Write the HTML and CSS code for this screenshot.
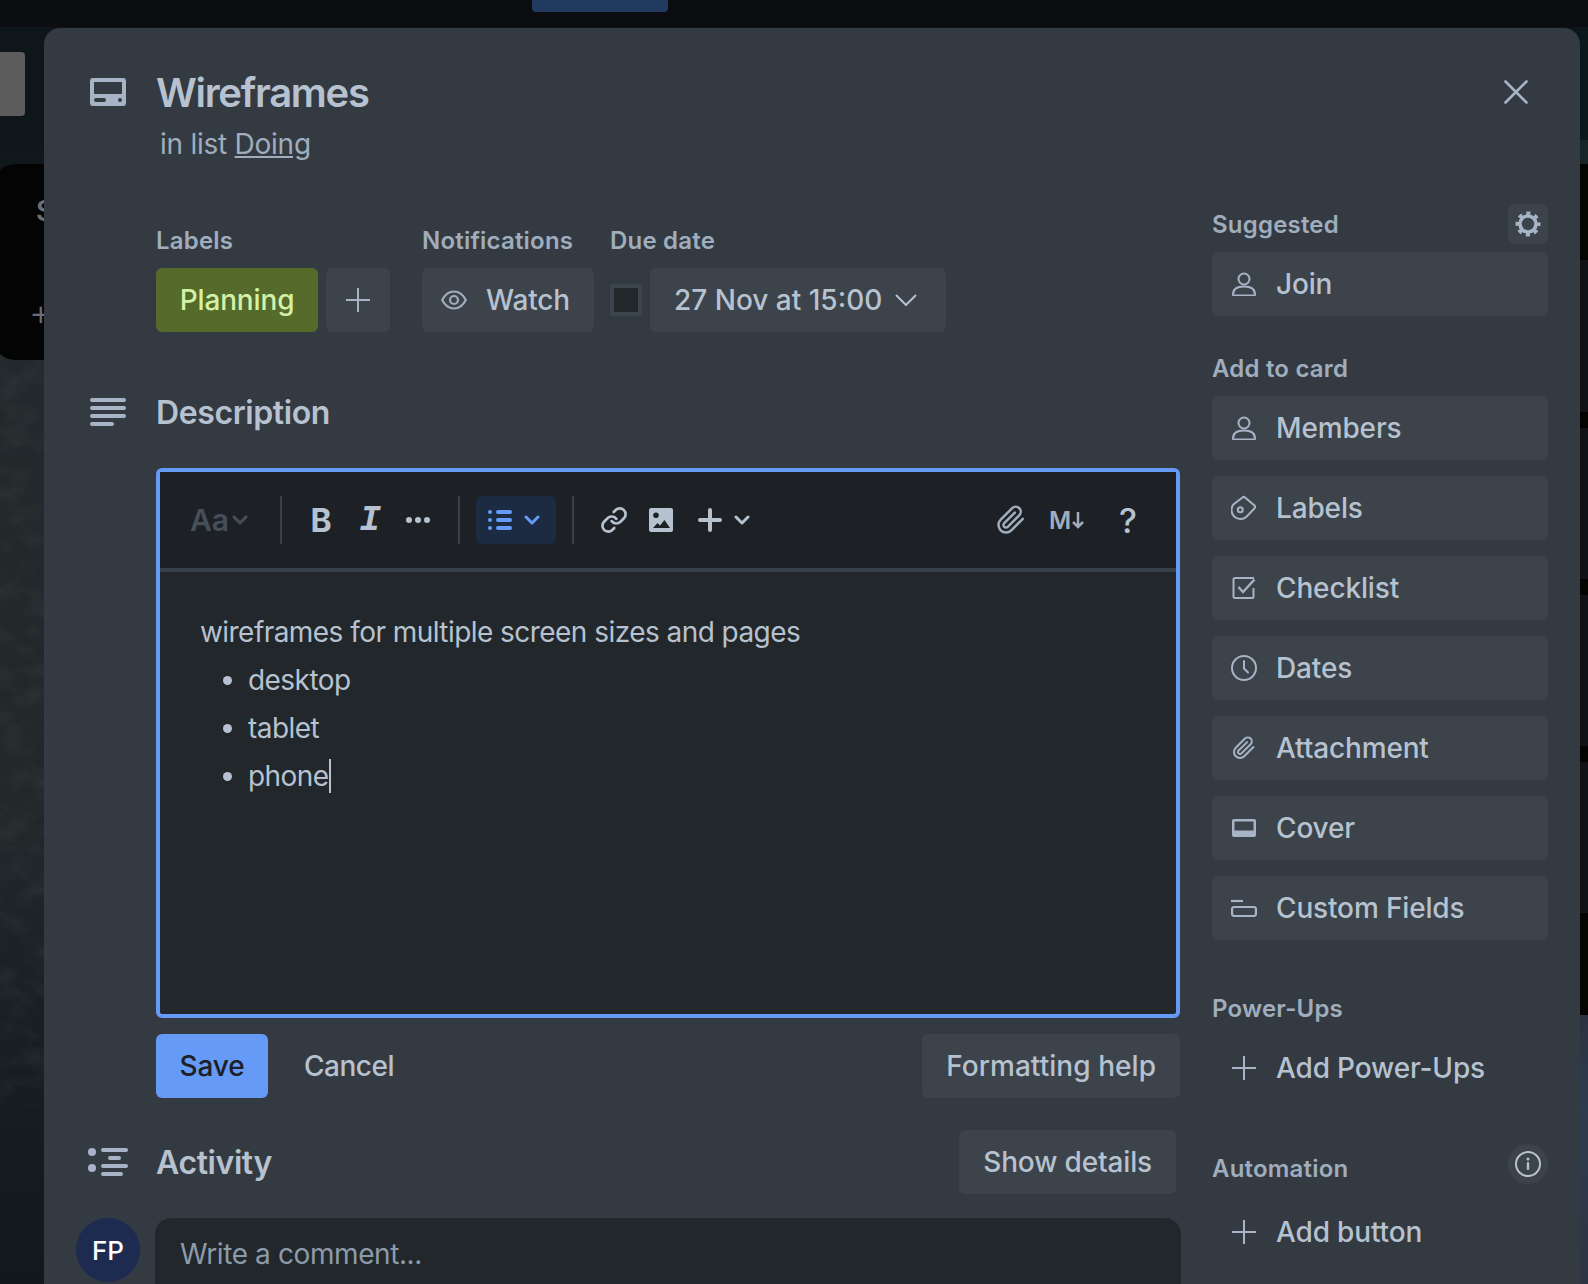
FILE: index.html
```html
<!DOCTYPE html>
<html lang="en">
<head>
    <meta charset="UTF-8">
    <meta name="viewport" content="width=device-width, initial-scale=1.0">
    <title>Wireframes</title>
    <link rel="stylesheet" href="styles.css">
</head>
<body>
    <!-- board behind the modal -->
    <div class="topbar"><div class="topbar-tab"></div></div>
    <div class="board-left">
        <svg class="texture" width="44" height="760">
            <filter id="marble">
                <feTurbulence type="fractalNoise" baseFrequency="0.035 0.05" numOctaves="4" seed="7"/>
                <feColorMatrix type="matrix" values="0 0 0 0 0.62  0 0 0 0 0.62  0 0 0 0 0.62  1.6 0 0 0 -0.62"/>
            </filter>
            <rect width="44" height="760" filter="url(#marble)"/>
        </svg>
        <div class="board-btn"></div>
        <div class="board-list"><span class="list-s">S</span><span class="list-plus">+</span></div>
    </div>
    <div class="board-right">
        <div class="r-band r-top"></div>
        <div class="r-band r-teal"></div>
        <div class="r-band r-black r-h96"></div>
        <div class="r-band r-card r-first"><span class="r-letter">n</span></div>
        <div class="r-band r-black r-h16"></div>
        <div class="r-band r-card"></div>
        <div class="r-band r-black r-h16"></div>
        <div class="r-band r-card"></div>
        <div class="r-band r-black r-h16"></div>
        <div class="r-band r-card"></div>
        <div class="r-band r-black r-h102"></div>
    </div>

    <div class="modal">
        <button class="close-btn" aria-label="Close">
            <svg width="24" height="24" viewBox="0 0 24 24"><path d="M1.5 1.5l21 21M22.500 1.500l-21 21" stroke="currentColor" stroke-width="2.600" stroke-linecap="round"/></svg>
        </button>

        <header class="card-header">
            <span class="head-icon">
                <svg width="36" height="28" viewBox="0 0 36 28"><path fill="currentColor" fill-rule="evenodd" d="M3 0h30a3 3 0 0 1 3 3v22a3 3 0 0 1-3 3H3a3 3 0 0 1-3-3V3a3 3 0 0 1 3-3zM4 4v12h28V4zM6 20a2 2 0 0 0 0 4h8a2 2 0 0 0 0-4zM30 20a2 2 0 1 0 0 4 2 2 0 0 0 0-4z"/></svg>
            </span>
            <div>
                <h1 class="card-title">Wireframes</h1>
                <p class="card-sub">in list <a href="#">Doing</a></p>
            </div>
        </header>

        <div class="columns">
            <main class="main-col">
                <div class="meta-row">
                    <div class="meta-group">
                        <div class="caption">Labels</div>
                        <div class="meta-items">
                            <span class="label-pill">Planning</span>
                            <button class="btn btn-square">
                                <svg width="24" height="24" viewBox="0 0 24 24"><path d="M12 0v24M0 12h24" stroke="currentColor" stroke-width="2"/></svg>
                            </button>
                        </div>
                    </div>
                    <div class="meta-group">
                        <div class="caption">Notifications</div>
                        <div class="meta-items">
                            <button class="btn btn-icon">
                                <svg width="26" height="20" viewBox="0 0 26 20"><path d="M1.200 10C4 4.500 8 1.500 13 1.500S22 4.500 24.800 10C22 15.500 18 18.500 13 18.500S4 15.500 1.200 10z" fill="none" stroke="currentColor" stroke-width="2.200"/><circle cx="13" cy="10" r="4" fill="none" stroke="currentColor" stroke-width="2.200"/></svg>
                                Watch
                            </button>
                        </div>
                    </div>
                    <div class="meta-group">
                        <div class="caption">Due date</div>
                        <div class="meta-items">
                            <span class="due-check"></span>
                            <button class="btn btn-date">
                                27 Nov at 15:00
                                <svg width="22" height="12" viewBox="0 0 22 12"><path d="M1 1l10 10L21 1" fill="none" stroke="currentColor" stroke-width="2"/></svg>
                            </button>
                        </div>
                    </div>
                </div>

                <div class="section-head desc-head">
                    <span class="head-icon">
                        <svg width="36" height="28" viewBox="0 0 36 28" fill="currentColor"><rect width="36" height="4" rx="2"/><rect y="8" width="36" height="4" rx="2"/><rect y="16" width="36" height="4" rx="2"/><rect y="24" width="24" height="4" rx="2"/></svg>
                    </span>
                    <h2>Description</h2>
                </div>

                <div class="editor">
                    <div class="toolbar">
                        <span class="tb-aa">Aa</span>
                        <svg class="chev chev-aa" width="16" height="10" viewBox="0 0 16 10"><path d="M2 2l6 6 6-6" fill="none" stroke="currentColor" stroke-width="3" stroke-linecap="round" stroke-linejoin="round"/></svg>
                        <span class="tb-sep sep-a"></span>
                        <span class="tb-b">B</span>
                        <span class="tb-i">I</span>
                        <svg class="tb-dots" width="24" height="6" viewBox="0 0 24 6" fill="currentColor"><circle cx="3" cy="3" r="3"/><circle cx="12" cy="3" r="3"/><circle cx="21" cy="3" r="3"/></svg>
                        <span class="tb-sep sep-b"></span>
                        <span class="tb-active">
                            <svg width="24" height="22" viewBox="0 0 24 22" fill="currentColor"><circle cx="2" cy="3" r="2"/><circle cx="2" cy="11" r="2"/><circle cx="2" cy="19" r="2"/><rect x="8" y="1" width="16" height="4" rx="2"/><rect x="8" y="9" width="16" height="4" rx="2"/><rect x="8" y="17" width="16" height="4" rx="2"/></svg>
                            <svg width="16" height="10" viewBox="0 0 16 10"><path d="M2 2l6 6 6-6" fill="none" stroke="currentColor" stroke-width="3" stroke-linecap="round" stroke-linejoin="round"/></svg>
                        </span>
                        <span class="tb-sep sep-c"></span>
                        <svg class="tb-link" width="28" height="28" viewBox="0 0 24 24" fill="none" stroke="currentColor" stroke-width="2.300" stroke-linecap="round"><path d="M10 13a5 5 0 0 0 7.540.54l3-3a5 5 0 0 0-7.070-7.070l-1.720 1.710"/><path d="M14 11a5 5 0 0 0-7.540-.54l-3 3a5 5 0 0 0 7.070 7.070l1.710-1.710"/></svg>
                        <svg class="tb-image" width="24" height="24" viewBox="0 0 24 24"><path fill="currentColor" fill-rule="evenodd" d="M2 0h20a2 2 0 0 1 2 2v20a2 2 0 0 1-2 2H2a2 2 0 0 1-2-2V2a2 2 0 0 1 2-2zM7 4.500a2.800 2.800 0 1 0 0 5.600 2.800 2.800 0 0 0 0-5.600zM4 20h17l-5.500-8-4.500 5.500-2.500-2.500z"/></svg>
                        <svg class="tb-plus" width="24" height="24" viewBox="0 0 24 24"><path d="M12 2v20M2 12h20" stroke="currentColor" stroke-width="4" stroke-linecap="round"/></svg>
                        <svg class="chev tb-plus-chev" width="16" height="10" viewBox="0 0 16 10"><path d="M2 2l6 6 6-6" fill="none" stroke="currentColor" stroke-width="3" stroke-linecap="round" stroke-linejoin="round"/></svg>
                        <span class="tb-spacer"></span>
                        <svg class="tb-clip" width="30" height="30" viewBox="0 0 24 24" fill="none" stroke="currentColor" stroke-width="2" stroke-linecap="round" stroke-linejoin="round"><path d="M21.440 11.050l-9.190 9.190a6 6 0 0 1-8.490-8.490l9.190-9.190a4 4 0 0 1 5.660 5.660l-9.200 9.190a2 2 0 0 1-2.830-2.830l8.490-8.480"/></svg>
                        <span class="tb-md">M<svg width="12" height="18" viewBox="0 0 12 18"><path d="M6 1v15M1 11l5 5 5-5" fill="none" stroke="currentColor" stroke-width="2.500"/></svg></span>
                        <span class="tb-help">?</span>
                    </div>
                    <div class="editor-body">
                        <p>wireframes for multiple screen sizes and pages</p>
                        <ul>
                            <li>desktop</li>
                            <li>tablet</li>
                            <li><span class="caret-text">phone</span></li>
                        </ul>
                    </div>
                </div>

                <div class="editor-actions">
                    <button class="btn btn-save">Save</button>
                    <button class="btn btn-plain">Cancel</button>
                    <button class="btn btn-help">Formatting help</button>
                </div>

                <div class="section-head activity-head">
                    <span class="head-icon">
                        <svg width="40" height="28" viewBox="0 0 40 28" fill="currentColor"><circle cx="4" cy="4" r="4"/><circle cx="4" cy="20" r="4"/><rect x="13" width="27" height="4" rx="2"/><rect x="20" y="8" width="13" height="4" rx="2"/><rect x="13" y="16" width="27" height="4" rx="2"/><rect x="13" y="24" width="22" height="4" rx="2"/></svg>
                    </span>
                    <h2>Activity</h2>
                    <button class="btn btn-details">Show details</button>
                </div>

                <div class="comment-row">
                    <span class="avatar">FP</span>
                    <div class="comment-box">Write a comment...</div>
                </div>
            </main>

            <aside class="sidebar">
                <div class="side-head">
                    <span class="caption">Suggested</span>
                    <span class="mini-btn">
                        <svg width="26" height="26" viewBox="0 0 26 26" fill="none" stroke="currentColor"><circle cx="13" cy="13" r="8" stroke-width="3.600"/><circle cx="13" cy="13" r="10.500" stroke-width="4" stroke-dasharray="4 4.250" stroke-dashoffset="2"/></svg>
                    </span>
                </div>
                <button class="side-btn">
                    <svg width="24" height="24" viewBox="0 0 24 24" fill="none" stroke="currentColor" stroke-width="2"><circle cx="12" cy="7" r="5.500"/><path d="M1 22.500c0-5 4-8 11-8s11 3 11 8c0 .5-.4 1-1 1H2c-.6 0-1-.5-1-1z"/></svg>
                    Join
                </button>

                <div class="caption side-caption">Add to card</div>
                <div class="side-list">
                    <button class="side-btn">
                        <svg width="24" height="24" viewBox="0 0 24 24" fill="none" stroke="currentColor" stroke-width="2"><circle cx="12" cy="7" r="5.500"/><path d="M1 22.500c0-5 4-8 11-8s11 3 11 8c0 .5-.4 1-1 1H2c-.6 0-1-.5-1-1z"/></svg>
                        Members
                    </button>
                    <button class="side-btn">
                        <svg width="26" height="26" viewBox="0 0 26 26" fill="none" stroke="currentColor" stroke-width="2"><path d="M11.500 2.500q1.300-1.300 2.500 0L23.500 10.500q1.300 1.500 0 2.800L15.500 21.800a9 9 0 0 1-12.800-12.600z"/><circle cx="9.300" cy="14.700" r="2.500"/></svg>
                        Labels
                    </button>
                    <button class="side-btn">
                        <svg width="24" height="24" viewBox="0 0 24 24" fill="none" stroke="currentColor" stroke-width="2"><path d="M22 2H3a1.500 1.500 0 0 0-1.500 1.500v17A1.500 1.500 0 0 0 3 22h17a1.500 1.500 0 0 0 1.500-1.500V12"/><path d="M6.500 11l4.500 5L22.500 3.500" stroke-width="2.400"/></svg>
                        Checklist
                    </button>
                    <button class="side-btn">
                        <svg width="26" height="26" viewBox="0 0 26 26" fill="none" stroke="currentColor" stroke-width="2"><circle cx="13" cy="13" r="12"/><path d="M13 6v7.500l4 4" stroke-linecap="round"/></svg>
                        Dates
                    </button>
                    <button class="side-btn">
                        <svg width="24" height="26" viewBox="0 0 24 24" fill="none" stroke="currentColor" stroke-width="2" stroke-linecap="round" stroke-linejoin="round"><path d="M21.440 11.050l-9.190 9.190a6 6 0 0 1-8.490-8.490l9.190-9.190a4 4 0 0 1 5.660 5.660l-9.200 9.190a2 2 0 0 1-2.830-2.830l8.490-8.480"/></svg>
                        Attachment
                    </button>
                    <button class="side-btn">
                        <svg width="24" height="18" viewBox="0 0 24 18"><path fill="currentColor" fill-rule="evenodd" d="M2 0h20a2 2 0 0 1 2 2v14a2 2 0 0 1-2 2H2a2 2 0 0 1-2-2V2a2 2 0 0 1 2-2zM2.500 2.500v9h19v-9z"/></svg>
                        Cover
                    </button>
                    <button class="side-btn">
                        <svg width="26" height="18" viewBox="0 0 26 18" fill="none" stroke="currentColor" stroke-width="2.200"><rect x="1.100" y="8" width="23.800" height="9" rx="2"/><path d="M0 2h12"/></svg>
                        Custom Fields
                    </button>
                </div>

                <div class="caption side-caption power-caption">Power-Ups</div>
                <button class="side-btn side-btn-plain">
                    <svg width="24" height="24" viewBox="0 0 24 24"><path d="M12 0v24M0 12h24" stroke="currentColor" stroke-width="2"/></svg>
                    Add Power-Ups
                </button>

                <div class="side-head auto-head">
                    <span class="caption">Automation</span>
                    <span class="mini-btn mini-round">
                        <svg width="26" height="26" viewBox="0 0 26 26"><circle cx="13" cy="13" r="12" fill="none" stroke="currentColor" stroke-width="2"/><circle cx="13" cy="8" r="1.500" fill="currentColor"/><rect x="11.800" y="11" width="2.400" height="8" rx="1" fill="currentColor"/></svg>
                    </span>
                </div>
                <button class="side-btn side-btn-plain">
                    <svg width="24" height="24" viewBox="0 0 24 24"><path d="M12 0v24M0 12h24" stroke="currentColor" stroke-width="2"/></svg>
                    Add button
                </button>
            </aside>
        </div>
    </div>
</body>
</html>
```

FILE: styles.css
```css
* {
    box-sizing: border-box;
}
html, body {
    height: 1284px;
    overflow: hidden;
}
body {
    margin: 0;
    position: relative;
    background-color: #0f1519;
    font-family: Inter, "Liberation Sans", sans-serif;
    color: #b6c2cf;
}
button {
    font-family: inherit;
    border: none;
    cursor: pointer;
}
h1, h2, p, ul {
    margin: 0;
    padding: 0;
}
svg {
    display: block;
    flex-shrink: 0;
}

/* board behind the modal */
.topbar {
    position: relative;
    height: 27px;
    background-color: #0b0d10;
}
.topbar-tab {
    position: absolute;
    left: 532px;
    top: 0;
    width: 136px;
    height: 12px;
    background-color: #233a60;
    border-radius: 0 0 4px 4px;
}
.board-left {
    position: absolute;
    left: 0;
    top: 27px;
    width: 44px;
    height: 1257px;
    overflow: hidden;
    background: linear-gradient(#0f161a 0, #10171b 120px, #22282b 340px, #22272a 800px, #171f25 1000px, #12181c 1257px);
}
.texture {
    position: absolute;
    left: 0;
    top: 320px;
    opacity: 0.07;
}
.board-btn {
    position: absolute;
    left: -10px;
    top: 25px;
    width: 35px;
    height: 64px;
    background-color: #5c5c5c;
    border-radius: 4px;
}
.board-list {
    position: absolute;
    left: -8px;
    top: 137px;
    width: 120px;
    height: 196px;
    background-color: #030403;
    border-radius: 24px;
    color: #6c6f75;
    font-weight: 600;
}
.list-s {
    position: absolute;
    left: 44px;
    top: 30px;
    font-size: 28px;
}
.list-plus {
    position: absolute;
    left: 37px;
    top: 126px;
    font-size: 36px;
    font-weight: 300;
}
.board-right {
    position: absolute;
    left: 1580px;
    top: 27px;
    width: 8px;
    height: 1257px;
    overflow: hidden;
    display: flex;
    flex-direction: column;
    background: linear-gradient(#2a3340 990px, #2f3b4e 1080px, #2d3542 1257px);
}
.r-top {
    height: 113px;
    background-color: #0b181c;
}
.r-teal {
    height: 24px;
    background-color: #172428;
}
.r-black {
    background-color: #040503;
}
.r-h96 {
    height: 96px;
}
.r-h16 {
    height: 16px;
}
.r-h102 {
    height: 102px;
}
.r-card {
    height: 151px;
    background-color: #101215;
    color: #8e959c;
    overflow: hidden;
}
.r-first {
    height: 152px;
}
.r-letter {
    display: block;
    margin-left: -16px;
    margin-top: 42px;
    font-size: 28px;
    line-height: 32px;
}

/* modal */
.modal {
    position: absolute;
    left: 44px;
    top: 28px;
    width: 1536px;
    height: 1256px;
    overflow: hidden;
    background-color: #343a42;
    border-radius: 16px 16px 0 0;
}
.close-btn {
    position: absolute;
    left: 1460px;
    top: 52px;
    padding: 0;
    background: none;
    color: #a6b4c5;
}
.card-header {
    display: flex;
    padding: 40px 0 0 40px;
    gap: 24px;
}
.head-icon {
    width: 48px;
    height: 48px;
    display: flex;
    align-items: center;
    justify-content: center;
    color: #a6b4c5;
    flex-shrink: 0;
}
.card-title {
    font-size: 40px;
    line-height: 46px;
    padding-top: 2px;
    font-weight: 600;
    letter-spacing: -1.300px;
    color: #b6c2cf;
}
.card-sub {
    margin-top: 8px;
    padding-left: 4px;
    font-size: 28px;
    line-height: 40px;
    letter-spacing: -0.250px;
    color: #9fadbc;
}
.card-sub a {
    color: #9fadbc;
}
.columns {
    display: flex;
    gap: 32px;
    margin: 40px 0 0 112px;
}
.main-col {
    width: 1024px;
    flex-shrink: 0;
    padding-top: 21px;
}
.caption {
    font-size: 24px;
    line-height: 32px;
    font-weight: 600;
    letter-spacing: 0.200px;
    color: #9fadbc;
}
.meta-row {
    display: flex;
}
.meta-group {
    margin-right: 32px;
}
.meta-group:nth-child(2) {
    margin-right: 16px;
}
.meta-group:nth-child(2) .meta-items {
    width: 172px;
}
.meta-items {
    display: flex;
    align-items: center;
    margin-top: 11px;
    gap: 8px;
}
.label-pill {
    height: 64px;
    width: 162px;
    display: flex;
    align-items: center;
    justify-content: center;
    background-color: #556a2b;
    color: #d3f1a7;
    font-size: 28px;
    font-weight: 500;
    letter-spacing: -0.150px;
    border-radius: 6px;
}
.btn {
    height: 64px;
    display: flex;
    align-items: center;
    background-color: #3c434b;
    color: #b6c2cf;
    font-size: 28px;
    font-weight: 500;
    letter-spacing: -0.150px;
    border-radius: 6px;
    padding: 0 24px;
    white-space: nowrap;
}
.btn-square {
    width: 64px;
    padding: 0;
    justify-content: center;
    color: #a6b4c5;
}
.btn-icon {
    width: 172px;
    padding: 0 0 0 19px;
    gap: 19px;
}
.btn-icon svg {
    color: #9fadbc;
}
.due-check {
    width: 32px;
    height: 32px;
    background-color: #22272b;
    border: 4px solid #3c454d;
    border-radius: 3px;
}
.btn-date {
    width: 296px;
    gap: 13px;
    letter-spacing: 0;
}
.btn-date svg {
    color: #b6c2cf;
}
.section-head {
    display: flex;
    align-items: center;
    margin-left: -72px;
    gap: 24px;
}
.section-head h2 {
    font-size: 32px;
    line-height: 46px;
    padding-top: 2px;
    font-weight: 600;
    letter-spacing: -0.400px;
    color: #b6c2cf;
}
.desc-head {
    margin-top: 56px;
}

/* editor */
.editor {
    margin-top: 32px;
    height: 550px;
    border: 4px solid #669af7;
    border-radius: 6px;
    background-color: #22272b;
}
.toolbar {
    height: 100px;
    display: flex;
    align-items: center;
    padding-left: 30px;
    background-color: #1d2125;
    border-bottom: 4px solid #38414a;
    color: #b6c2cf;
}
.tb-aa {
    font-size: 30px;
    font-weight: 600;
    color: #454f59;
    width: 42px;
}
.chev-aa {
    color: #454f59;
}
.tb-sep {
    width: 2px;
    height: 48px;
    background-color: #38414a;
}
.sep-a {
    margin-left: 32px;
}
.tb-b {
    margin-left: 27px;
    width: 24px;
    font-size: 32px;
    font-weight: 700;
    text-align: center;
}
.tb-i {
    margin-left: 25px;
    width: 24px;
    font-family: "Liberation Mono", monospace;
    font-style: italic;
    font-weight: 700;
    font-size: 36px;
    text-align: center;
}
.tb-dots {
    margin-left: 24px;
}
.sep-b {
    margin-left: 28px;
}
.tb-active {
    display: flex;
    align-items: center;
    gap: 12px;
    margin-left: 16px;
    width: 80px;
    height: 48px;
    padding-left: 12px;
    background-color: #1c2b41;
    border-radius: 6px;
    color: #669af7;
}
.sep-c {
    margin-left: 16px;
}
.tb-link {
    margin-left: 26px;
}
.tb-image {
    margin-left: 21px;
}
.tb-plus {
    margin-left: 25px;
}
.tb-plus-chev {
    margin-left: 12px;
}
.tb-spacer {
    flex: 1;
}
.tb-clip {
    color: #9fadbc;
}
.tb-md {
    display: flex;
    align-items: center;
    width: 34px;
    margin-left: 23px;
    gap: 1px;
    font-size: 24px;
    font-weight: 600;
    color: #9fadbc;
}
.tb-help {
    margin-left: 36px;
    margin-right: 39px;
    font-size: 34px;
    font-weight: 500;
    color: #b6c2cf;
}
.editor-body {
    padding: 36px 40px 0;
    font-size: 28px;
    line-height: 48px;
    letter-spacing: -0.550px;
    color: #b6c2cf;
}
.editor-body ul {
    list-style: none;
    padding-left: 48px;
}
.editor-body li {
    position: relative;
}
.editor-body li::before {
    content: "";
    position: absolute;
    left: -25px;
    top: 20px;
    width: 9px;
    height: 9px;
    border-radius: 50%;
    background-color: #b6c2cf;
}
.caret-text {
    border-right: 2px solid #b6c2cf;
}
.editor-actions {
    display: flex;
    margin-top: 16px;
}
.btn-save {
    width: 112px;
    justify-content: center;
    padding: 0;
    background-color: #669af7;
    color: #1d2125;
}
.btn-plain {
    margin-left: 8px;
    padding: 0 28px;
    letter-spacing: -0.500px;
    background: none;
}
.btn-help {
    margin-left: auto;
    letter-spacing: 0.050px;
}
.activity-head {
    margin-top: 32px;
}
.btn-details {
    margin-left: auto;
    margin-right: 4px;
}
.comment-row {
    display: flex;
    margin: 24px -1px 0 -80px;
    gap: 15px;
}
.avatar {
    width: 64px;
    height: 64px;
    flex-shrink: 0;
    display: flex;
    align-items: center;
    justify-content: center;
    border-radius: 50%;
    background-color: #1c2b4f;
    color: #fff;
    font-size: 26px;
    font-weight: 500;
}
.comment-box {
    flex: 1;
    height: 80px;
    padding: 16px 25px;
    font-size: 28px;
    line-height: 40px;
    letter-spacing: -0.400px;
    background-color: #22272b;
    border-radius: 16px;
    color: #8c9bab;
}

/* sidebar */
.sidebar {
    width: 336px;
    flex-shrink: 0;
}
.side-head {
    display: flex;
    align-items: center;
    justify-content: space-between;
    height: 40px;
    margin-bottom: 8px;
}
.side-head .caption {
    padding-top: 2px;
}
.mini-btn {
    width: 40px;
    height: 40px;
    display: flex;
    align-items: center;
    justify-content: center;
    background-color: #3c434b;
    border-radius: 8px;
    color: #a6b4c5;
}
.mini-round {
    border-radius: 50%;
    color: #b6c2cf;
}
.side-btn {
    width: 100%;
    height: 64px;
    display: flex;
    align-items: center;
    background-color: #3c434b;
    border-radius: 6px;
    color: #b6c2cf;
    font-size: 28px;
    font-weight: 500;
    letter-spacing: -0.150px;
    padding: 0;
    text-align: left;
}
.side-btn svg {
    margin: 0 20px 0 20px;
    color: #a6b4c5;
}
.side-btn svg[width="26"] {
    margin: 0 19px 0 19px;
}
.side-btn-plain {
    background: none;
}
.side-caption {
    margin-top: 37px;
    margin-bottom: 11px;
}
.side-list {
    display: flex;
    flex-direction: column;
    gap: 16px;
}
.power-caption {
    margin-top: 53px;
    margin-bottom: 11px;
}
.auto-head {
    margin-top: 44px;
    margin-bottom: 16px;
}
.auto-head .caption {
    padding-top: 10px;
}
```
